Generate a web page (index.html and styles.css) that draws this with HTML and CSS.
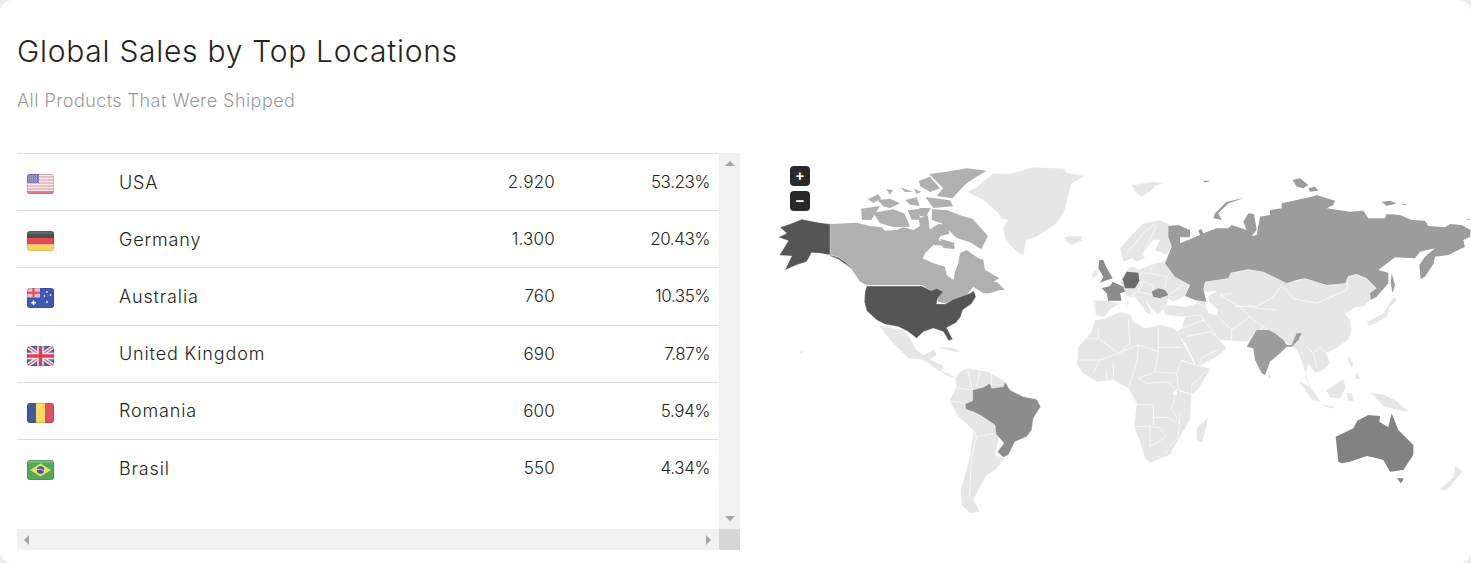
FILE: index.html
```html
<!DOCTYPE html>
<html lang="en">
<head>
<meta charset="utf-8">
<title>Global Sales by Top Locations</title>
<link rel="stylesheet" href="styles.css">
</head>
<body>
<main class="card">
  <header class="card-header">
    <h1 class="card-title">Global Sales by Top Locations</h1>
    <p class="card-sub">All Products That Were Shipped</p>
  </header>
  <section class="card-body">
    <div class="scroller">
      <table class="sales">
        <tbody>
          <tr>
            <td class="c-flag"><svg class="flag" viewBox="0 0 27 20"><rect width="27" height="20" fill="#e9a3a8"/><path d="M0 1.5h27M0 4.5h27M0 7.5h27M0 10.5h27M0 13.5h27M0 16.5h27" stroke="#fff" stroke-width="1.4" opacity=".8"/><rect y="0" width="12" height="9" fill="#6a72bd"/><path d="M1 2h10M1 4.5h10M1 7h10" stroke="#b8bde0" stroke-width="1" stroke-dasharray="1 1"/><rect y="17" width="27" height="3" fill="#d9737c"/><rect x=".5" y=".5" width="26" height="19" rx="2.5" fill="none" stroke="#000" stroke-opacity=".14"/></svg></td>
            <td class="c-name">USA</td><td class="c-num">2.920</td><td class="c-pct">53.23%</td>
          </tr>
          <tr>
            <td class="c-flag"><svg class="flag" viewBox="0 0 27 20"><rect width="27" height="7" fill="#3c3c3c"/><rect y="7" width="27" height="6.5" fill="#e5353f"/><rect y="13.5" width="27" height="6.5" fill="#fbd04f"/><rect width="27" height="3" fill="#fff" opacity=".12"/><rect x=".5" y=".5" width="26" height="19" rx="2.5" fill="none" stroke="#000" stroke-opacity=".14"/></svg></td>
            <td class="c-name">Germany</td><td class="c-num">1.300</td><td class="c-pct">20.43%</td>
          </tr>
          <tr>
            <td class="c-flag"><svg class="flag" viewBox="0 0 27 20"><rect width="27" height="20" fill="#2c48a8"/><rect width="13" height="9.5" fill="#e9b4c0"/><path d="M6.5 0v9.5M0 4.7h13" stroke="#d8384a" stroke-width="2"/><path d="M6.5 12.5v4.5M4.3 14.7h4.5" stroke="#fff" stroke-width="1.6"/><circle cx="20" cy="4" r=".9" fill="#dfe4f5"/><circle cx="23.5" cy="7" r=".9" fill="#dfe4f5"/><circle cx="17.5" cy="8" r=".9" fill="#dfe4f5"/><circle cx="20" cy="14" r="1" fill="#dfe4f5"/><rect x=".5" y=".5" width="26" height="19" rx="2.5" fill="none" stroke="#000" stroke-opacity=".14"/></svg></td>
            <td class="c-name">Australia</td><td class="c-num">760</td><td class="c-pct">10.35%</td>
          </tr>
          <tr>
            <td class="c-flag"><svg class="flag" viewBox="0 0 27 20"><rect width="27" height="20" fill="#46589f"/><path d="M0 0l27 20M27 0L0 20" stroke="#f0e6ea" stroke-width="4"/><path d="M0 0l27 20M27 0L0 20" stroke="#d85a70" stroke-width="1.4"/><path d="M13.5 0v20M0 10h27" stroke="#f5eef0" stroke-width="6.5"/><path d="M13.5 0v20M0 10h27" stroke="#d92e45" stroke-width="3.6"/><rect x=".5" y=".5" width="26" height="19" rx="2.5" fill="none" stroke="#000" stroke-opacity=".14"/></svg></td>
            <td class="c-name">United Kingdom</td><td class="c-num">690</td><td class="c-pct">7.87%</td>
          </tr>
          <tr>
            <td class="c-flag"><svg class="flag" viewBox="0 0 27 20"><rect width="9" height="20" fill="#2b4a8f"/><rect x="9" width="9" height="20" fill="#fbd54e"/><rect x="18" width="9" height="20" fill="#dd3c50"/><rect x=".5" y=".5" width="26" height="19" rx="2.5" fill="none" stroke="#000" stroke-opacity=".14"/></svg></td>
            <td class="c-name">Romania</td><td class="c-num">600</td><td class="c-pct">5.94%</td>
          </tr>
          <tr>
            <td class="c-flag"><svg class="flag" viewBox="0 0 27 20"><rect width="27" height="20" fill="#3fa048"/><rect width="27" height="3" fill="#fff" opacity=".2"/><path d="M13.5 3.5L24 10 13.5 16.5 3 10z" fill="#f3d64e"/><circle cx="13.5" cy="10" r="3.7" fill="#2c4a8c"/><path d="M10 9.5q3.5-1 7 1.2" stroke="#e8eef5" stroke-width=".8" fill="none"/><rect x=".5" y=".5" width="26" height="19" rx="2.5" fill="none" stroke="#000" stroke-opacity=".14"/></svg></td>
            <td class="c-name">Brasil</td><td class="c-num">550</td><td class="c-pct">4.34%</td>
          </tr>
        </tbody>
      </table>
      <div class="bar-v"><span class="tri tri-up"></span><span class="tri tri-down"></span></div>
      <div class="bar-h"><span class="tri tri-left"></span><span class="tri tri-right"></span></div>
      <div class="bar-corner"></div>
    </div>
    <div class="map">
      <div class="zoom">
        <button class="zoom-btn" type="button">+</button>
        <button class="zoom-btn" type="button">−</button>
      </div>
      <svg class="map-svg" viewBox="741 153 730 397" aria-label="World map">
        <!-- North America & Atlantic -->
        <g transform="translate(770 150) scale(.33333)" stroke="#fff" stroke-width="1" stroke-linejoin="round">
          <path class="m-light" d="M745 65L790 52 880 55 890 68 945 78 905 100 895 135 885 180 860 220 800 260 770 270 760 315 740 305 720 285 705 265 700 230 715 210 695 205 685 190 640 150 590 125 620 112 670 70 715 72Z"/>
          <path class="m-light" d="M880 262L900 258 935 258 935 272 905 285 890 275Z"/>
          <path class="m-can" d="M180 222L260 218 300 228 335 232 345 242 380 240 400 232 430 240 450 228 480 238 505 222 535 225 538 252 512 258 505 270 535 288 490 285 465 310 458 325 490 340 525 350 530 375 550 390 555 365 565 340 570 310 590 300 625 325 640 330 645 360 688 385 670 395 680 395 705 420 690 420 660 430 640 430 610 410 590 435 550 450 525 460 505 455 480 420 455 405 290 405 270 395 250 365 225 335 205 320 180 315Z"/>
          <path class="m-can" d="M478 72L530 65 590 55 650 62 620 80 590 100 565 125 548 145 500 138 520 115 495 90Z"/>
          <path class="m-can" d="M447 92L480 80 510 115 480 126 450 108Z"/>
          <path class="m-can" d="M486 178L530 180 570 196 607 206 654 258 634 298 600 277 560 264 535 240 515 220 485 210Z"/>
          <path class="m-can" d="M310 188L370 178 404 191 420 230 370 231 330 220Z"/>
          <path class="m-can" d="M273 176L330 168 304 210 276 210Z"/>
          <path class="m-can" d="M293 148L325 133 334 146 310 158ZM323 150L360 146 390 160 360 174 340 169ZM406 150L440 142 449 168 420 164ZM448 174L482 174 469 199 450 199ZM413 181L449 176 449 209 425 209ZM466 141L540 151 549 169 490 174ZM391 112L429 125 405 126ZM348 118L369 120 360 133ZM431 116L454 125 440 132ZM446 205L474 196 479 239 450 229ZM510 266L552 278 554 297 520 294Z"/>
          <path class="m-usa" d="M180 222L150 218 95 208 60 222 30 232 50 250 25 262 55 272 38 300 28 316 65 318 45 360 80 345 110 335 125 308 150 310 180 315 205 322 225 335 248 358 225 342 205 328 180 318Z"/>
          <path class="m-usa" d="M290 408L455 408 485 422 500 415 520 425 503 445 500 462 525 462 550 448 600 430 612 422 618 440 604 462 578 480 572 500 558 518 530 533 548 568 536 572 520 545 490 535 460 545 440 565 415 545 385 530 345 523 320 510 290 482 283 455 285 425Z"/>
          <path class="m-light" d="M985 375L968 385 965 370 980 358Z"/>
          <rect class="m-usa" x="93" y="605" width="3" height="3"/>
        </g>
        <!-- Europe, Middle East -->
        <g transform="translate(1070 260) scale(.33333)" stroke="#fff" stroke-width="1" stroke-linejoin="round">
          <path class="m-light" d="M150 65L165 35 185 18 205 30 240 15 285 3 310 30 360 70 345 108 310 125 295 115 290 135 265 165 250 150 228 125 240 145 247 165 232 160 195 112 175 112 165 95Z"/>
          <path class="m-light" d="M70 120L115 122 150 130 118 150 105 170 75 165Z"/>
          <path class="line" d="M76 122L76 165M175 112L205 95 250 105M205 95L215 62 250 78 245 95M208 38L240 40 245 20M240 40L290 50 310 30M290 50L285 88M295 105L340 75"/>
          <path class="m-light" d="M345 170L395 165 400 180 430 215 445 235 470 265 440 290 380 322 370 300 345 250 320 215 335 205Z"/>
          <path class="line" d="M335 205L400 180M350 230L420 215 445 235M380 322L400 290 445 270"/>
          <path class="m-mid2" d="M128 65L160 80 165 95 150 100 155 122 115 122 110 100 95 85 120 78Z"/>
          <path class="m-mid2" d="M88 0L100 0 108 20 128 55 105 62 90 68 100 50 85 25Z"/>
          <path class="m-light" d="M65 40L80 30 85 45 68 55Z"/>
          <path class="m-ger" d="M170 35L205 38 208 62 195 85 165 85 158 58Z"/>
          <path class="m-mid2" d="M245 95L265 85 285 90 295 105 270 115 250 110Z"/>
          <path class="m-light" d="M170 125L176 125 176 135 170 135Z"/>
        </g>
        <!-- Eurasia -->
        <g transform="translate(1100 150) scale(.33333)" stroke="#fff" stroke-width="1" stroke-linejoin="round">
          <path class="m-light" d="M95 105L130 100 160 95 190 100 165 108 150 125 125 140 105 125Z"/>
          <path class="m-light" d="M60 295L100 250 130 220 180 210 210 225 205 260 215 290 200 315 165 300 180 270 160 270 130 310 135 325 110 335 95 325 70 335Z"/>
          <path class="line" d="M80 310L130 250 165 222M125 320L150 270 170 225"/>
          <path class="m-light" d="M285 450L310 420 315 395 385 385 392 368 445 358 490 365 560 400 615 385 680 405 735 400 745 378 770 372 800 385 830 415 810 450 790 470 770 470 735 490 750 510 755 540 745 570 700 600 680 610 690 640 670 660 645 670 625 640 615 680 640 725 620 680 600 620 590 600 555 575 500 560 440 575 360 570 340 545 310 510 305 495 250 500 195 495 190 470 210 465 255 470 290 460Z"/>
          <path class="m-white" d="M315 425L350 422 325 440 328 455 355 480 350 495 325 490 315 460Z"/>
          <path class="line" d="M290 455L345 495M395 430L360 435 420 470 450 500 395 540 395 570M545 405L520 440 470 470 405 470M545 405L580 445 650 460 740 420M740 420L745 378M450 500L490 530 445 570M350 495L395 540M490 530L530 560M445 465L475 475 530 480M620 590L640 610 660 590 680 610M640 610L650 650"/>
          <path class="m-light" d="M880 440L892 450 870 470 860 500 830 520 805 527 800 515 850 490 865 465Z"/>
          <path class="m-russia" d="M205 228L235 225 270 240 270 262 240 262 240 280 300 255 295 240 305 238 310 250 350 235 385 235 395 225 440 240 430 215 445 190 462 192 470 240 455 258 470 255 480 200 510 195 510 180 545 175 545 160 635 140 650 135 680 145 705 152 700 165 680 175 750 185 790 182 805 205 855 205 860 192 900 195 935 210 975 212 985 228 1035 232 1050 222 1085 225 1112 240 1110 260 1090 270 1095 290 1045 315 1005 320 1000 342 975 380 962 388 958 345 975 320 1005 295 960 305 945 325 885 322 835 360 865 368 865 400 830 440 812 450 810 430 830 415 800 385 770 372 745 378 735 400 680 405 615 385 590 390 560 400 490 365 445 358 392 368 385 385 315 395 310 420 320 455 285 450 255 438 270 405 225 380 195 340 205 315 215 290 205 260Z"/>
          <path class="m-russia" d="M435 143L380 155 345 190 340 205 365 210 355 190 385 160Z"/>
          <path class="m-russia" d="M875 370L885 405 878 430 872 400Z"/>
          <path class="m-russia" d="M578 90L600 85 625 105 610 115 590 110ZM625 115L645 110 655 122 630 125ZM845 155L870 152 890 160 860 168ZM900 160L920 163 915 166ZM1095 207L1110 206 1110 210ZM310 92L330 92 315 98Z"/>
        </g>
        <!-- Americas south, Africa -->
        <g transform="translate(880 330) scale(.33333)" stroke="#fff" stroke-width="1" stroke-linejoin="round">
          <path class="m-light" d="M-5-15L70 0 90 25 110 60 130 75 165 58 170 75 150 88 190 108 185 122 225 140 215 142 180 125 145 100 120 88 85 85 60 60 30 30Z"/>
          <path class="m-light" d="M170 52L215 52 250 68 205 62Z"/>
          <path class="m-light" d="M225 145L240 125 262 115 325 125 370 150 392 180 345 375 375 385 345 420 318 438 300 470 280 510 300 545 270 550 245 525 242 480 270 380 280 300 235 260 208 212 230 170Z"/>
          <path class="m-bra" d="M278 180L310 172 330 160 335 175 370 170 375 155 390 180 430 200 470 208 482 230 460 265 455 300 440 320 405 335 385 375 370 382 352 365 372 340 348 312 345 285 305 258 280 245 258 238 255 222 278 212Z"/>
          <path class="line" d="M262 115L270 150 278 180M210 212L258 222M280 300L290 320 275 380 268 500M290 320L345 310M300 120L290 170M335 125L335 170M232 175L278 180"/>
          <path class="m-light" d="M595 50L635 5 645-30 675-35 720-55 752-45 760-25 795-5 840-15 885-5 900 20 945 105 992 115 960 170 935 195 930 270 900 320 870 375 810 398 795 385 782 340 762 290 770 220 745 175 700 150 650 155 610 130 590 105Z"/>
          <path class="line" d="M620 25L655 25 715 70 660 90 590 90M715 70L775 45 835 65 835-10M655 25L655-5M715 70L750 40 745-30M775 45L770 100 745 175M835 52L905 52M835 65L825 125 775 145M825 125L890 130 905 90 945 105M890 130L895 180 935 195 935 165 990 115M775 145L800 160 860 155 890 180 875 235 900 280M765 222L820 225 820 285M820 262L860 262 900 280M762 290L810 290 810 350 860 320 840 295 810 290M900 250L895 320 870 350M700 100L700 150M680 120L680 150M660 90L640 130"/>
          <path class="m-light" d="M985 260L975 310 965 338 950 330 950 295Z"/>
          <circle cx="885" cy="190" r="6" class="m-white"/>
          <circle cx="857" cy="366" r="5" class="m-light"/>
        </g>
        <!-- South Asia, Oceania -->
        <g transform="translate(1220 330) scale(.33333)" stroke="#fff" stroke-width="1" stroke-linejoin="round">
          <path class="m-india" d="M110 0L145 0 165 10 190 30 200 45 215 45 230 10 245 10 235 30 215 50 200 50 185 65 150 95 135 135 125 130 105 90 100 55 80 50Z"/>
          <path class="m-light" d="M145 130L155 140 150 147 143 140Z"/>
          <path class="m-light" d="M385 75L400 100 395 112 384 95ZM408 130L422 145 405 148Z"/>
          <path class="m-light" d="M318 180L370 148 378 170 360 207 330 202Z"/>
          <path class="m-light" d="M238 155L270 170 302 215 275 210Z"/>
          <path class="m-light" d="M298 222L350 230 330 236Z"/>
          <path class="m-light" d="M378 190L395 188 402 212 385 214Z"/>
          <path class="m-light" d="M450 188L490 193 530 213 567 247 520 238 490 228 470 207Z"/>
          <path class="m-aus" d="M347 320L400 295 412 272 445 255 480 258 478 275 505 292 515 250 535 300 580 345 580 375 550 420 510 425 490 390 470 385 440 378 390 395 365 400 355 395Z"/>
          <path class="m-aus" d="M530 445L552 445 543 460Z"/>
          <path class="m-light" d="M660 478L700 440 705 405 728 425 690 470 675 482Z"/>
        </g>
      </svg>
    </div>
  </section>
</main>
</body>
</html>
```

FILE: styles.css
```css
* { box-sizing: border-box; }
html, body { margin: 0; height: 100%; }
body {
  background: #ecebe6;
  font-family: Inter, "Open Sans", "Liberation Sans", sans-serif;
  color: #252422;
  overflow: hidden;
}
.card {
  height: 563px;
  background: #fff;
  border-radius: 12px;
  overflow: hidden;
  display: flex;
  flex-direction: column;
}
.card-header { padding: 33px 17px 0; height: 153px; }
.card-title {
  margin: 0;
  font-size: 30px;
  line-height: 36px;
  font-weight: 300;
  letter-spacing: .72px;
}
.card-sub {
  margin: 21px 0 0;
  font-size: 18px;
  line-height: 22px;
  font-weight: 300;
  color: #9a9a9a;
  letter-spacing: .45px;
}
.card-body { display: flex; }
.scroller {
  position: relative;
  margin-left: 17px;
  width: 723px;
  height: 397px;
  flex: none;
}
.sales {
  width: 702px;
  border-collapse: collapse;
  table-layout: fixed;
  border-top: 1px solid #dddddd;
}
.sales tr { height: 57.2px; border-bottom: 1px solid #dddddd; }
.sales tr:last-child { border-bottom: 0; }
.sales td { padding: 0 9px; font-size: 17px; font-weight: 300; letter-spacing: .2px; }
.c-flag { width: 102px; padding: 4px 0 0 10px !important; }
.sales .c-name { width: 300px; padding-left: 0; white-space: nowrap; font-size: 18px; letter-spacing: .85px; }
.c-num { width: 145px; text-align: right; }
.sales .c-pct { text-align: right; letter-spacing: -.4px; padding-right: 9px; }
.flag { display: block; width: 27px; height: 20px; border-radius: 3px; opacity: .9; }
.bar-v { position: absolute; left: 702px; top: 0; width: 21px; height: 376px; background: #f1f1f1; }
.bar-h { position: absolute; left: 0; top: 376px; width: 702px; height: 21px; background: #f1f1f1; }
.bar-corner { position: absolute; left: 702px; top: 376px; width: 21px; height: 21px; background: #d6d6d6; }
.tri { position: absolute; width: 0; height: 0; border-style: solid; border-color: transparent; }
.tri-up { left: 6px; top: 8px; border-width: 0 5px 5px; border-bottom-color: #a3a3a3; }
.tri-down { left: 6px; bottom: 8px; border-width: 5px 5px 0; border-top-color: #a3a3a3; }
.tri-left { left: 7px; top: 6px; border-width: 5px 5px 5px 0; border-right-color: #a3a3a3; }
.tri-right { right: 8px; top: 6px; border-width: 5px 0 5px 5px; border-left-color: #a3a3a3; }
.map { position: relative; flex: 1; height: 397px; min-width: 0; margin-left: 1px; }
.map-svg { display: block; width: 730px; height: 397px; }
.zoom { position: absolute; left: 49px; top: 13px; display: flex; flex-direction: column; gap: 5px; }
.zoom-btn {
  width: 20px;
  height: 20px;
  padding: 0;
  border: 0;
  border-radius: 4px;
  background: #292929;
  color: #fff;
  font: 700 15px/20px "Liberation Sans", sans-serif;
}
.m-light { fill: #e6e6e6; }
.m-white { fill: #fff; stroke: none; }
.m-can { fill: #b0b0b0; stroke: none; }
.m-usa { fill: #555555; }
.m-russia { fill: #9c9c9c; stroke: none; }
.m-mid2 { fill: #8c8c8c; stroke: none; }
.m-ger { fill: #6c6c6c; stroke: none; }
.m-bra { fill: #8c8c8c; }
.m-india { fill: #9c9c9c; stroke: none; }
.m-aus { fill: #828282; stroke: none; }
.line { fill: none; stroke: #fff; stroke-width: 2; }
```
